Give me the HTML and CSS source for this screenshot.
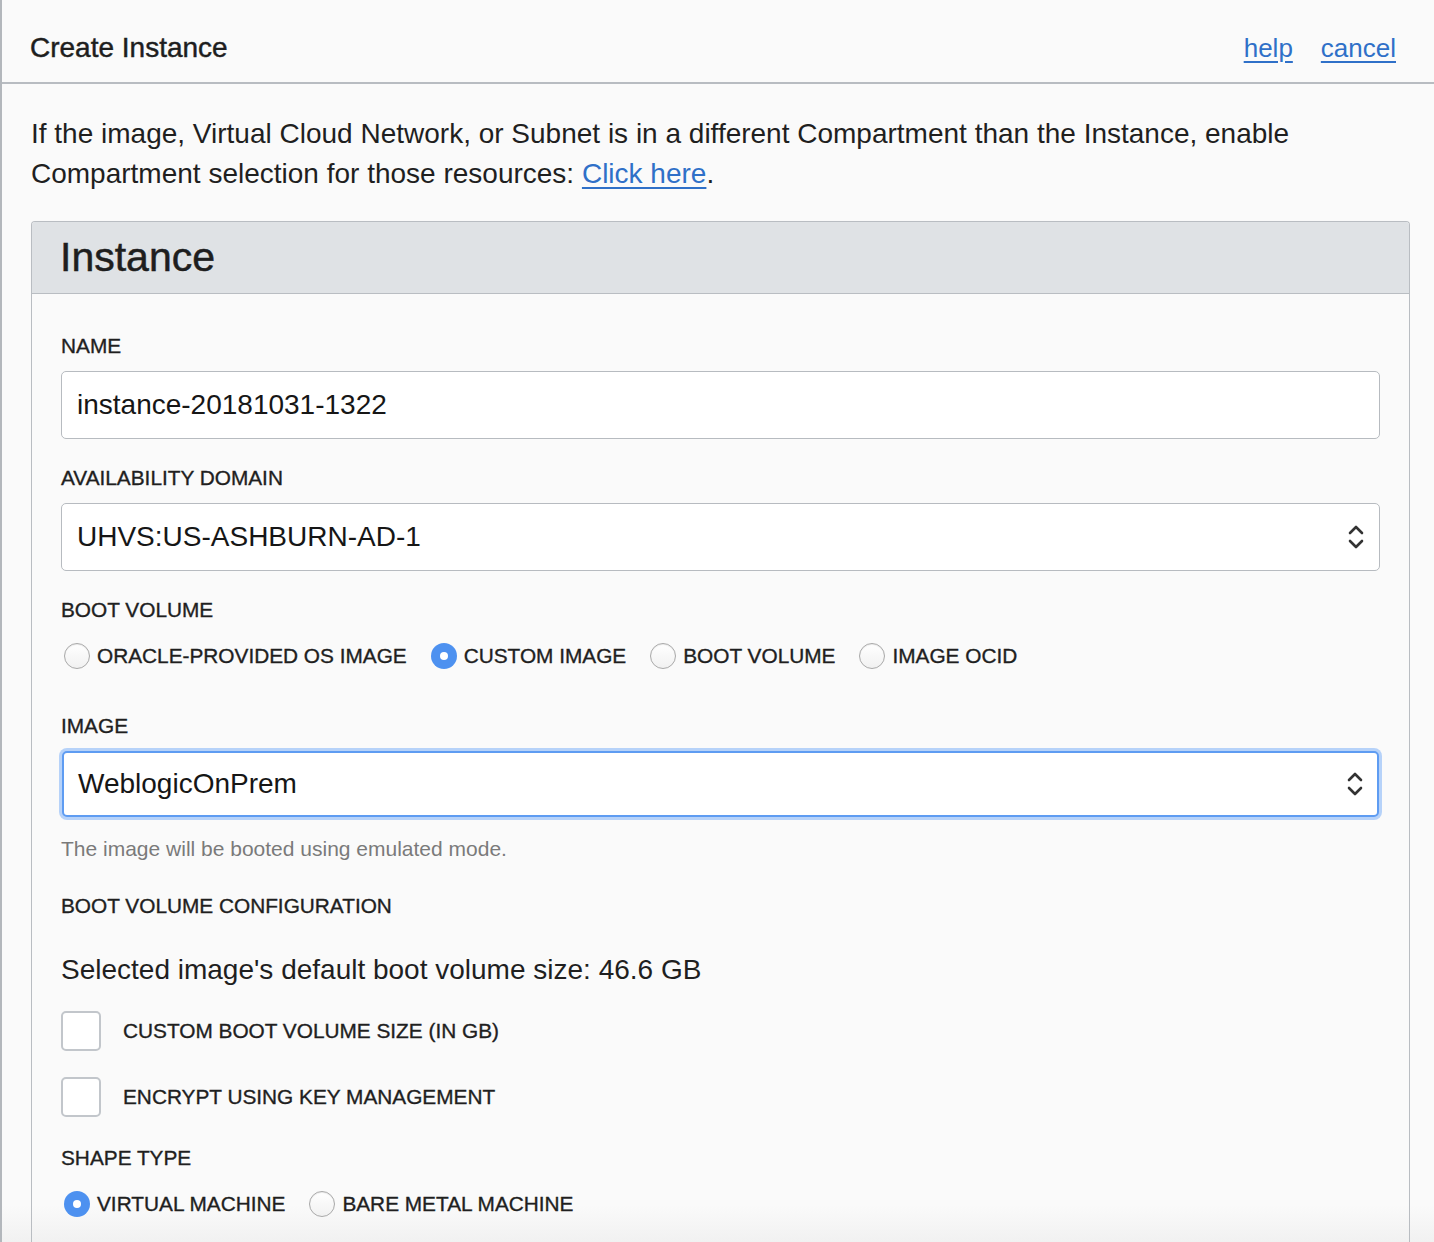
FILE: index.html
```html
<!DOCTYPE html>
<html>
<head>
<meta charset="utf-8">
<link rel="stylesheet" href="styles.css">
</head>
<body>
<div class="page">
  <header class="topbar">
    <h1 class="title">Create Instance</h1>
    <nav class="toplinks"><a href="#">help</a><a href="#">cancel</a></nav>
  </header>
  <main class="content">
    <p class="intro">If the image, Virtual Cloud Network, or Subnet is in a different Compartment than the Instance, enable Compartment selection for those resources: <a href="#">Click here</a>.</p>
    <section class="panel">
      <div class="panel-head"><h2>Instance</h2></div>
      <div class="panel-body">
        <div class="group">
          <div class="label">NAME</div>
          <div class="field"><span>instance-20181031-1322</span></div>
        </div>
        <div class="group">
          <div class="label">AVAILABILITY DOMAIN</div>
          <div class="field select"><span>UHVS:US-ASHBURN-AD-1</span>
            <svg class="chev" width="18" height="28" viewBox="0 0 18 28"><path d="M3 10 L9 4 L15 10 M3 18 L9 24 L15 18" fill="none" stroke="#333" stroke-width="2.6" stroke-linecap="round" stroke-linejoin="round"/></svg>
          </div>
        </div>
        <div class="label">BOOT VOLUME</div>
        <div class="radios radios-boot">
          <label class="radio"><span class="dot"></span>ORACLE-PROVIDED OS IMAGE</label>
          <label class="radio"><span class="dot on"></span>CUSTOM IMAGE</label>
          <label class="radio"><span class="dot"></span>BOOT VOLUME</label>
          <label class="radio"><span class="dot"></span>IMAGE OCID</label>
        </div>
        <div class="label label-image">IMAGE</div>
        <div class="field select focus"><span>WeblogicOnPrem</span>
          <svg class="chev" width="18" height="28" viewBox="0 0 18 28"><path d="M3 10 L9 4 L15 10 M3 18 L9 24 L15 18" fill="none" stroke="#333" stroke-width="2.6" stroke-linecap="round" stroke-linejoin="round"/></svg>
        </div>
        <p class="help">The image will be booted using emulated mode.</p>
        <div class="label label-cfg">BOOT VOLUME CONFIGURATION</div>
        <p class="size">Selected image's default boot volume size: 46.6 GB</p>
        <label class="check check-1"><span class="box"></span>CUSTOM BOOT VOLUME SIZE (IN GB)</label>
        <label class="check check-2"><span class="box"></span>ENCRYPT USING KEY MANAGEMENT</label>
        <div class="label label-shape">SHAPE TYPE</div>
        <div class="radios radios-shape">
          <label class="radio"><span class="dot on"></span>VIRTUAL MACHINE</label>
          <label class="radio"><span class="dot"></span>BARE METAL MACHINE</label>
        </div>
      </div>
    </section>
  </main>
</div>
</body>
</html>
```
FILE: styles.css
```css
html, body {
  margin: 0;
  padding: 0;
  background: #fafafa;
  font-family: "Liberation Sans", Arial, sans-serif;
  color: #1f1f1f;
}
.page {
  border-left: 2px solid #b3b7bc;
  min-height: 1242px;
  box-sizing: border-box;
  background: linear-gradient(to bottom, #fafafa 0, #fafafa 1205px, #f1f1f1 1242px);
}
.topbar {
  height: 84px;
  box-sizing: border-box;
  border-bottom: 2px solid #b8bcc1;
  display: flex;
  align-items: center;
  justify-content: space-between;
  padding: 14px 38px 0 28px;
}
.title {
  margin: 0;
  font-size: 28px;
  font-weight: 400;
  -webkit-text-stroke: 0.45px #1e1e1e;
  color: #1e1e1e;
}
.toplinks {
  display: flex;
  gap: 28px;
}
.toplinks a, .intro a {
  color: #2f70c8;
  text-decoration: underline;
  text-underline-offset: 4px;
}
.toplinks a {
  font-size: 26px;
}
.content {
  padding: 30px 24px 0 29px;
}
.intro {
  margin: 0;
  font-size: 28px;
  line-height: 40px;
  color: #1f1f1f;
}
.panel {
  margin-top: 27px;
  border: 1px solid #b9bdc2;
  border-bottom: none;
  border-radius: 4px 4px 0 0;
  height: 1030px;
}
.panel-head {
  height: 71px;
  background: #dfe2e5;
  border-bottom: 1px solid #b9bdc2;
  display: flex;
  align-items: center;
  padding-left: 28px;
  border-radius: 3px 3px 0 0;
}
.panel-head h2 {
  margin: 0;
  font-size: 41px;
  font-weight: 400;
  -webkit-text-stroke: 0.5px #1e1e1e;
  color: #1e1e1e;
}
.panel-body {
  padding: 40px 29px 0 29px;
}
.label {
  font-size: 20.8px;
  line-height: 24px;
  -webkit-text-stroke: 0.35px #1f1f1f;
  color: #1f1f1f;
}
.group {
  margin-bottom: 27px;
}
.group .label {
  margin-bottom: 13px;
}
.field {
  height: 68px;
  box-sizing: border-box;
  border: 1px solid #b7bbc0;
  border-radius: 5px;
  background: #ffffff;
  display: flex;
  align-items: center;
  justify-content: space-between;
  padding: 0 14px 0 15px;
  font-size: 28px;
  color: #161616;
}
.chev {
  display: block;
}
.radios {
  display: flex;
  align-items: center;
  gap: 24px;
  height: 30px;
}
.radios-boot {
  margin-top: 19px;
  padding-left: 3px;
}
.radio {
  display: flex;
  align-items: center;
  gap: 7px;
  font-size: 20.8px;
  -webkit-text-stroke: 0.35px #1f1f1f;
  color: #1f1f1f;
}
.dot {
  width: 26px;
  height: 26px;
  box-sizing: border-box;
  border-radius: 50%;
  border: 1px solid #a9a9a9;
  background: linear-gradient(to bottom, #ffffff, #f1f1f1);
  box-shadow: inset 0 1px 1px rgba(0,0,0,0.08);
  position: relative;
  -webkit-text-stroke: 0;
}
.dot.on {
  border: none;
  background: #4d91f0;
  box-shadow: none;
}
.dot.on::after {
  content: "";
  position: absolute;
  left: 9px;
  top: 9px;
  width: 8px;
  height: 8px;
  border-radius: 50%;
  background: #ffffff;
}
.label-image {
  margin-top: 43px;
  margin-bottom: 13px;
}
.field.focus {
  border: 2px solid #5e9cf2;
  box-shadow: 0 0 0 3px #b6d2f9;
  height: 66px;
  margin-left: 1px;
  margin-right: 1px;
  padding-left: 14px;
  padding-right: 13px;
}
.help {
  margin: 20px 0 0 0;
  font-size: 21px;
  line-height: 24px;
  color: #7a7a7a;
}
.label-cfg {
  margin-top: 33px;
}
.size {
  margin: 34px 0 0 0;
  font-size: 28px;
  line-height: 36px;
  color: #1f1f1f;
}
.check {
  display: flex;
  align-items: center;
  gap: 22px;
  font-size: 20.8px;
  -webkit-text-stroke: 0.35px #1f1f1f;
  color: #1f1f1f;
}
.check-1 {
  margin-top: 23px;
}
.check-2 {
  margin-top: 26px;
}
.box {
  width: 40px;
  height: 40px;
  box-sizing: border-box;
  border: 2px solid #c2c6cb;
  border-radius: 5px;
  background: #ffffff;
}
.label-shape {
  margin-top: 29px;
}
.radios-shape {
  margin-top: 19px;
  padding-left: 3px;
  gap: 24px;
}
```
